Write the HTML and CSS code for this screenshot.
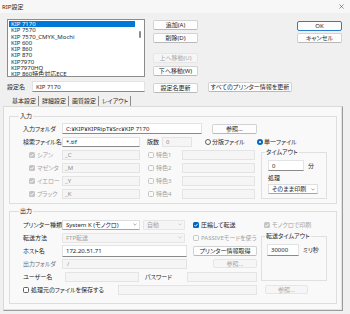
FILE: index.html
```html
<!DOCTYPE html>
<html lang="ja">
<head>
    <meta charset="UTF-8">
    <title>RIP設定</title>
    <link rel="stylesheet" href="styles.css">
</head>
<body>
<div class="window">
    <div class="titlebar">
        <span>RIP設定</span>
        <svg class="close" viewBox="0 0 6 6"><path d="M0.5 0.5L5.5 5.5M5.5 0.5L0.5 5.5" stroke="#333" stroke-width="0.6"/></svg>
    </div>

    <div class="top">
        <div class="list-col">
            <div class="list">
                <div class="item sel">KIP 7170</div>
                <div class="item">KIP 7570</div>
                <div class="item">KIP 7570_CMYK_Mochi</div>
                <div class="item">KIP 600</div>
                <div class="item">KIP 860</div>
                <div class="item">KIP 870</div>
                <div class="item">KIP7970</div>
                <div class="item">KIP7970HQ</div>
                <div class="item">KIP 860特色対応ECE</div>
                <span class="thumb"></span>
            </div>
            <div class="name-row">
                <span class="name-label">設定名</span>
                <div class="field name-field">KIP 7170</div>
            </div>
        </div>
        <div class="btn-col">
            <div class="btn first">追加(A)</div>
            <div class="btn">削除(D)</div>
            <div class="btn dis gap-l">上へ移動(U)</div>
            <div class="btn">下へ移動(W)</div>
            <div class="btn gap-m">設定名更新</div>
        </div>
        <div class="all-col">
            <div class="btn">すべてのプリンター情報を更新</div>
        </div>
        <div class="ok-col">
            <div class="btn default">OK</div>
            <div class="btn">キャンセル</div>
        </div>
    </div>

    <div class="tabs">
        <div class="tab active">基本設定</div>
        <div class="tab">詳細設定</div>
        <div class="tab">画質設定</div>
        <div class="tab">レイアウト</div>
    </div>

    <div class="panel">
        <!-- 入力 -->
        <fieldset class="group">
            <legend>入力</legend>
            <div class="in-grid">
                <span class="lbl">入力フォルダ</span>
                <div class="field path-field">C:¥KIP¥KIPRipT¥Src¥KIP 7170</div>
                <div class="btn browse">参照...</div>

                <span class="lbl">検索ファイル名</span>
                <div class="field search-field">*.tif</div>
                <div class="plates">
                    <span>版数</span>
                    <div class="field dis plates-field">0</div>
                </div>
                <div class="radios">
                    <span class="radio split"><span class="rb"></span>分版ファイル</span>
                    <span class="radio"><span class="rb on"></span>単一ファイル</span>
                </div>

                <fieldset class="sub timeout">
                    <legend>タイムアウト</legend>
                    <div class="sub-row">
                        <div class="field minutes">0</div>
                        <span>分</span>
                    </div>
                    <div class="sub-label">処理</div>
                    <div class="select action">そのまま印刷<svg class="chev" viewBox="0 0 4 3"><path d="M0.4 0.6L2 2.2L3.6 0.6" fill="none" stroke="#555" stroke-width="0.5"/></svg></div>
                </fieldset>

                <span class="color"><span class="cb dis on"><svg viewBox="0 0 6 6"><path d="M1.3 3.1L2.5 4.3L4.7 1.8" fill="none" stroke="#fff" stroke-width="0.9"/></svg></span>シアン</span>
                <div class="field dis suffix">_C</div>
                <span class="spot"><span class="cb dis"></span>特色1</span>
                <div class="field dis spot-field"></div>

                <span class="color"><span class="cb dis on"><svg viewBox="0 0 6 6"><path d="M1.3 3.1L2.5 4.3L4.7 1.8" fill="none" stroke="#fff" stroke-width="0.9"/></svg></span>マゼンタ</span>
                <div class="field dis suffix">_M</div>
                <span class="spot"><span class="cb dis"></span>特色2</span>
                <div class="field dis spot-field"></div>

                <span class="color"><span class="cb dis on"><svg viewBox="0 0 6 6"><path d="M1.3 3.1L2.5 4.3L4.7 1.8" fill="none" stroke="#fff" stroke-width="0.9"/></svg></span>イエロー</span>
                <div class="field dis suffix">_Y</div>
                <span class="spot"><span class="cb dis"></span>特色3</span>
                <div class="field dis spot-field"></div>

                <span class="color"><span class="cb dis on"><svg viewBox="0 0 6 6"><path d="M1.3 3.1L2.5 4.3L4.7 1.8" fill="none" stroke="#fff" stroke-width="0.9"/></svg></span>ブラック</span>
                <div class="field dis suffix">_K</div>
                <span class="spot"><span class="cb dis"></span>特色4</span>
                <div class="field dis spot-field"></div>
            </div>
        </fieldset>

        <!-- 出力 -->
        <fieldset class="group out">
            <legend>出力</legend>
            <div class="out-grid">
                <span class="lbl">プリンター種類</span>
                <div class="select printer">System K (モノクロ)<svg class="chev" viewBox="0 0 4 3"><path d="M0.4 0.6L2 2.2L3.6 0.6" fill="none" stroke="#555" stroke-width="0.5"/></svg></div>
                <div class="select dis auto">自動<svg class="chev" viewBox="0 0 4 3"><path d="M0.4 0.6L2 2.2L3.6 0.6" fill="none" stroke="#aaa" stroke-width="0.5"/></svg></div>
                <span class="check compress"><span class="cb on"><svg viewBox="0 0 6 6"><path d="M1.3 3.1L2.5 4.3L4.7 1.8" fill="none" stroke="#fff" stroke-width="0.9"/></svg></span>圧縮して転送</span>
                <span class="check mono off"><span class="cb dis on"><svg viewBox="0 0 6 6"><path d="M1.3 3.1L2.5 4.3L4.7 1.8" fill="none" stroke="#fff" stroke-width="0.9"/></svg></span>モノクロで印刷</span>

                <span class="lbl">転送方法</span>
                <div class="select dis ftp">FTP転送<svg class="chev" viewBox="0 0 4 3"><path d="M0.4 0.6L2 2.2L3.6 0.6" fill="none" stroke="#aaa" stroke-width="0.5"/></svg></div>
                <span class="check passive off"><span class="cb dis"></span>PASSIVEモードを使う</span>

                <fieldset class="sub ttimeout">
                    <legend>転送タイムアウト</legend>
                    <div class="sub-row">
                        <div class="field msec">30000</div>
                        <span>ミリ秒</span>
                    </div>
                </fieldset>

                <span class="lbl">ホスト名</span>
                <div class="field host">172.20.51.71</div>
                <div class="btn info">プリンター情報取得</div>

                <span class="lbl muted">出力フォルダ</span>
                <div class="field dis outdir">/</div>
                <div class="btn dis browse2">参照...</div>

                <span class="lbl">ユーザー名</span>
                <div class="field dis user"></div>
                <span class="pass-lbl">パスワード</span>
                <div class="field dis pass"></div>

                <div class="keep">
                    <span class="check"><span class="cb"></span>処理元のファイルを保存する</span>
                    <div class="field dis keep-field"></div>
                </div>
                <div class="btn dis browse3">参照...</div>
            </div>
        </fieldset>
    </div>
</div>
</body>
</html>
```

FILE: styles.css
```css
/* base */
* {
    box-sizing: border-box;
}
body {
    margin: 0;
    background-color: #f0f0f0;
    font-family: "Noto Sans", "Noto Sans CJK JP", sans-serif;
    font-size: 6px;
    line-height: 8px;
    color: #262626;
    white-space: nowrap;
    font-feature-settings: "palt" 1;
    font-variant-east-asian: proportional-width;
}
.window {
    width: 350px;
    height: 314px;
    overflow: hidden;
}
.titlebar {
    height: 13px;
    display: flex;
    align-items: center;
    justify-content: space-between;
    padding: 0 6px 0 2px;
    background-color: #f7f7f7;
}
.close {
    width: 5px;
    height: 5px;
}

/* widgets */
.btn {
    height: 10px;
    display: flex;
    align-items: center;
    justify-content: center;
    background-color: #fdfdfd;
    border: 1px solid #d3d3d3;
    border-bottom-color: #b9b9b9;
    border-radius: 2px;
}
.btn.dis {
    color: #a8a8a8;
    background-color: #f6f6f6;
    border-color: #e6e6e6;
}
.btn.default {
    border-color: #2b7bd0;
}
.field {
    height: 11px;
    display: flex;
    align-items: center;
    padding-left: 3px;
    background-color: #fff;
    border: 1px solid #e3e3e3;
    border-bottom-color: #8a8a8a;
    overflow: hidden;
}
.field.dis {
    color: #8e8e8e;
    background-color: #f5f5f5;
    border-color: #e4e4e4;
}
.select {
    height: 10px;
    display: flex;
    align-items: center;
    justify-content: space-between;
    padding: 0 2px 0 3px;
    background-color: #fff;
    border: 1px solid #dedede;
    border-bottom-color: #a5a5a5;
    border-radius: 1px;
}
.select.dis {
    color: #a3a3a3;
    background-color: #f5f5f5;
    border-color: #e6e6e6;
}
.chev {
    width: 4px;
    height: 3px;
}
.cb {
    width: 6px;
    height: 6px;
    flex: none;
    display: inline-flex;
    border: 1px solid #5e5e5e;
    border-radius: 1.5px;
    background-color: #fff;
}
.cb svg {
    width: 100%;
    height: 100%;
}
.cb.on {
    background-color: #0067c0;
    border: none;
}
.cb.dis {
    border-color: #c4c4c4;
    background-color: #f9f9f9;
}
.cb.dis.on {
    background-color: #c4c4c4;
}
.rb {
    width: 6px;
    height: 6px;
    flex: none;
    border: 1px solid #5e5e5e;
    border-radius: 50%;
    background-color: #fff;
}
.rb.on {
    border: 2px solid #0067c0;
}
.check, .radio, .color, .spot {
    display: flex;
    align-items: center;
    gap: 2px;
}
.off {
    color: #a3a3a3;
}
.muted {
    color: #6e6e6e;
}

/* top area */
.top {
    display: flex;
    align-items: flex-start;
    padding: 6px 0 0 7px;
}
.list-col {
    width: 138px;
}
.list {
    position: relative;
    height: 58px;
    padding: 1px 9px 0 1px;
    background-color: #fff;
    border: 1px solid #8c8c8c;
    overflow: hidden;
}
.item {
    height: 6.3px;
    line-height: 6.3px;
    padding-left: 2px;
}
.item.sel {
    background-color: #0078d7;
    color: #fff;
}
.thumb {
    position: absolute;
    left: 131px;
    top: 11px;
    width: 1.5px;
    height: 7px;
    border-radius: 1px;
    background-color: #8a8a8a;
}
.name-row {
    display: flex;
    align-items: center;
    margin-top: 4px;
}
.name-label {
    width: 25px;
}
.name-field {
    flex: 1;
}
.btn-col {
    display: flex;
    flex-direction: column;
    width: 45px;
    margin-left: 8px;
}
.btn-col .btn {
    margin-top: 3px;
}
.btn-col .btn.first {
    margin-top: 1px;
}
.btn-col .btn.gap-l {
    margin-top: 10px;
}
.btn-col .btn.gap-m {
    margin-top: 7px;
}
.all-col {
    width: 84px;
    margin-left: 10px;
    padding-top: 63px;
}
.ok-col {
    display: flex;
    flex-direction: column;
    gap: 2px;
    width: 45px;
    margin-left: 5px;
    padding-top: 2px;
}

/* tabs */
.tabs {
    display: flex;
    height: 10px;
    margin-top: 3px;
    padding-left: 6px;
}
.tab {
    padding: 0 2px 0 3px;
    line-height: 10px;
    border-right: 1px solid #8e8e8e;
}
.tab:first-child {
    padding-left: 6px;
}
.panel {
    width: 340px;
    height: 205px;
    margin-left: 3px;
    padding: 5px;
    background-color: #f9f9f9;
    border: 1px solid #dadada;
    border-right-color: #9c9c9c;
    border-bottom-color: #9c9c9c;
    box-shadow: inset -1px -1px 0 #e2e2e2;
}

/* group boxes */
.group {
    margin: 0;
    padding: 2px 9px 3px 13px;
    border: 1px solid #dedede;
    min-inline-size: 0;
}
.group legend {
    margin-left: -4px;
    padding: 0 1px;
    line-height: 8px;
}
.group.out {
    margin-top: 3px;
    padding-top: 3px;
    padding-bottom: 7px;
}
.sub {
    margin: 0;
    padding: 0 0 0 6px;
    border: 1px solid #e0e0e0;
    min-inline-size: 0;
}
.sub legend {
    margin-left: -3px;
    padding: 0 1px;
    line-height: 8px;
}
.sub-row {
    display: flex;
    align-items: center;
    gap: 4px;
    margin-top: 4px;
}

/* 入力 */
.in-grid {
    display: grid;
    grid-template-columns: 39px 78px 7px 35px 23px 50px 6px 66px;
    grid-auto-rows: 13px;
    align-items: center;
}
.in-grid .lbl, .in-grid .color {
    grid-column: 1;
}
.path-field {
    grid-column: 2 / 6;
    width: 140px;
}
.browse {
    grid-column: 6 / 8;
    width: 45px;
    margin-left: 7px;
}
.search-field, .suffix {
    grid-column: 2;
}
.search-field {
    height: 10px;
}
.plates {
    grid-column: 4 / 6;
    display: flex;
    align-items: center;
}
.plates-field {
    width: 30px;
    height: 10px;
    margin-left: 3px;
}
.radios {
    grid-column: 6 / 9;
    display: flex;
    align-items: center;
}
.radio {
    gap: 1px;
}
.radio.split {
    width: 52px;
}
.color {
    padding-left: 6px;
    color: #a3a3a3;
}
.suffix {
    height: 10px;
    padding-left: 2px;
}
.spot {
    grid-column: 4;
    padding-left: 1px;
    color: #a3a3a3;
}
.spot-field {
    grid-column: 5 / 7;
    width: 73px;
    height: 10px;
}
.timeout {
    grid-column: 8;
    grid-row: 3 / 7;
    align-self: start;
    height: 51px;
}
.minutes {
    width: 36px;
    height: 11px;
}
.sub-label {
    margin-top: 3px;
}
.action {
    width: 50px;
    margin-top: 2px;
}

/* 出力 */
.out-grid {
    display: grid;
    grid-template-columns: 39px 78px 3px 44px 6px 64px 4px 66px;
    grid-auto-rows: 13px;
    align-items: center;
}
.out-grid .lbl {
    grid-column: 1;
}
.printer {
    grid-column: 2;
}
.auto {
    grid-column: 4;
    width: 42px;
}
.compress, .passive {
    grid-column: 6;
}
.mono {
    grid-column: 8;
    padding-left: 3px;
}
.ftp {
    grid-column: 2 / 5;
    width: 123px;
}
.ttimeout {
    grid-column: 8;
    grid-row: 2 / 6;
    align-self: start;
    height: 49px;
    margin-top: 1px;
}
.msec {
    width: 32px;
    height: 12px;
}
.ttimeout .sub-row {
    margin-left: -1px;
}
.host {
    grid-column: 2 / 5;
    width: 125px;
    height: 12px;
}
.info {
    grid-column: 6;
}
.outdir {
    grid-column: 2 / 5;
    width: 125px;
    height: 10px;
    padding-left: 4px;
}
.browse2 {
    grid-column: 6;
    margin-left: 20px;
    height: 9px;
}
.user {
    grid-column: 2;
    width: 74px;
    height: 10px;
    margin-left: 3px;
}
.pass-lbl {
    grid-column: 4;
    padding-left: 2px;
}
.pass {
    grid-column: 5 / 7;
    width: 70px;
    height: 10px;
}
.keep {
    grid-column: 1 / 7;
    display: flex;
    align-items: center;
}
.keep .check {
    width: 95px;
}
.keep-field {
    flex: 1;
    height: 10px;
}
.browse3 {
    grid-column: 8;
    width: 43px;
    height: 9px;
    margin-left: 4px;
}
```
